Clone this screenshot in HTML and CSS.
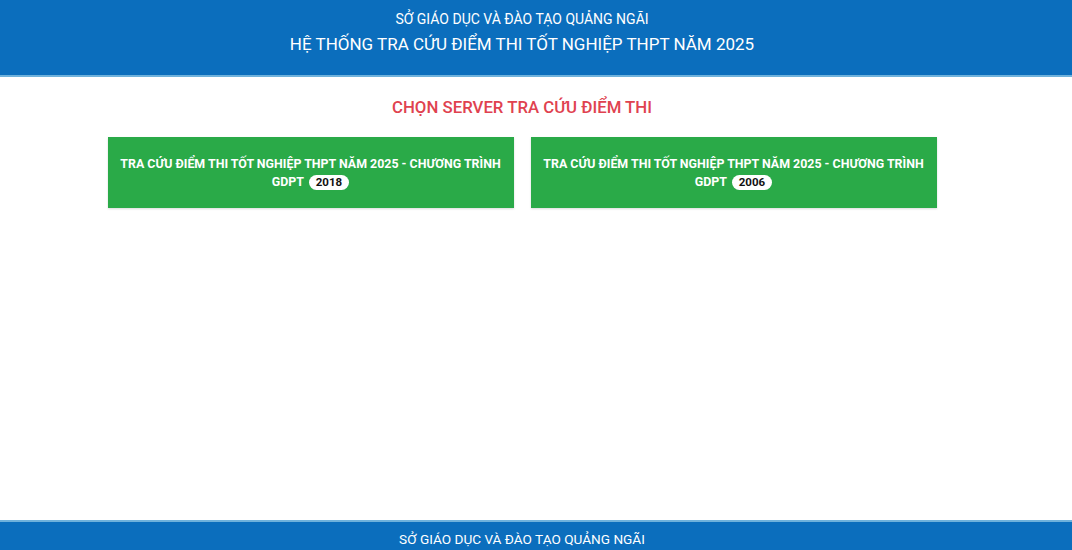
FILE: index.html
```html
<!DOCTYPE html>
<html lang="vi">
<head>
<meta charset="utf-8">
<title>Tra cứu điểm thi</title>
<link rel="stylesheet" href="styles.css">
</head>
<body>
<div class="page">
  <header class="header">
    <div class="inner">
      <div class="org">SỞ GIÁO DỤC VÀ ĐÀO TẠO QUẢNG NGÃI</div>
      <div class="sys">HỆ THỐNG TRA CỨU ĐIỂM THI TỐT NGHIỆP THPT NĂM 2025</div>
    </div>
  </header>
  <main class="main">
    <div class="inner">
      <h2 class="title">CHỌN SERVER TRA CỨU ĐIỂM THI</h2>
      <div class="cards">
        <a class="card" href="#">TRA CỨU ĐIỂM THI TỐT NGHIỆP THPT NĂM 2025 - CHƯƠNG TRÌNH GDPT <span class="badge">2018</span></a>
        <a class="card" href="#">TRA CỨU ĐIỂM THI TỐT NGHIỆP THPT NĂM 2025 - CHƯƠNG TRÌNH GDPT <span class="badge">2006</span></a>
      </div>
    </div>
  </main>
  <footer class="footer">
    <div class="inner">
      <div class="foot-org">SỞ GIÁO DỤC VÀ ĐÀO TẠO QUẢNG NGÃI</div>
    </div>
  </footer>
</div>
</body>
</html>
```
FILE: styles.css
```css
* { box-sizing: border-box; }
html, body { margin: 0; padding: 0; }
body {
  font-family: Roboto, "Noto Sans", "Liberation Sans", sans-serif;
  background: #ffffff;
  color: #222;
}
.page {
  min-height: 550px;
  display: flex;
  flex-direction: column;
}
.inner {
  padding-right: 28px;
}
.header {
  background: #0b6ebd;
  border-bottom: 2px solid #6fb2dc;
  height: 77px;
  color: #fff;
  text-align: center;
  padding-top: 10px;
}
.org {
  font-size: 14px;
  line-height: 18px;
}
.sys {
  font-size: 17px;
  line-height: 22px;
  margin-top: 5px;
}
.main {
  flex: 1;
}
.title {
  margin: 0;
  padding-top: 20px;
  text-align: center;
  color: #e0424f;
  font-size: 16.8px;
  font-weight: 500;
  line-height: 20px;
}
.cards {
  width: 829px;
  margin: 20px auto 0;
  display: grid;
  grid-template-columns: 1fr 1fr;
  gap: 17px;
}
.card {
  display: block;
  height: 71px;
  padding: 18px 10px 0;
  background: #2aaa48;
  color: #fff;
  text-decoration: none;
  text-align: center;
  font-size: 12.4px;
  font-weight: 700;
  line-height: 18px;
  box-shadow: 0 1px 2px rgba(0,0,0,0.15);
}
.badge {
  display: inline-block;
  margin-left: 2px;
  background: #fff;
  color: #111;
  border-radius: 10px;
  padding: 0 7px;
  line-height: 15px;
  font-size: 11.5px;
  font-weight: 700;
}
.footer {
  background: #0b6ebd;
  border-top: 2px solid #6fb2dc;
  height: 30px;
  color: #fff;
  text-align: center;
  padding-top: 9px;
}
.foot-org {
  font-size: 13.6px;
  line-height: 16px;
}
```
